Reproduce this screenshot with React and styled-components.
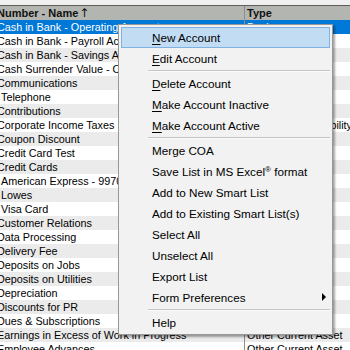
import React from 'react';
import styled, { createGlobalStyle, css } from 'styled-components';

const GlobalStyle = createGlobalStyle`
  html, body {
    margin: 0;
    padding: 0;
    background: #f0f0f0;
    overflow: hidden;
  }
  body {
    font-family: "Liberation Sans", Arial, sans-serif;
  }
`;

const Screen = styled.div`
  position: relative;
  width: 350px;
  height: 350px;
  overflow: hidden;
  background: #f0f0f0;
  padding-top: 5px;
  box-sizing: border-box;
`;

const Grid = styled.div`
  margin-left: -3px;
  width: 353px;
  border-top: 1px solid #5e5e5e;
`;

const HeaderRow = styled.div`
  display: grid;
  grid-template-columns: 247px 1fr;
  height: 14px;
  background: #b3b5b0;
  font-size: 11px;
  font-weight: bold;
  color: #111;
  line-height: 14px;
`;

const HeaderCell = styled.div`
  padding-left: ${p => (p.first ? '0' : '2px')};
  border-left: ${p => (p.first ? 'none' : '1px solid #8c8c8c')};
  white-space: nowrap;
  overflow: hidden;
`;

const SortArrow = styled.span`
  font-family: "DejaVu Sans", sans-serif;
  font-weight: normal;
  font-size: 12px;
  margin-left: 1px;
`;

const Row = styled.div`
  display: grid;
  grid-template-columns: 247px 1fr;
  height: 14px;
  line-height: 14px;
  font-size: 10.8px;
  color: #000;
  background: ${p => (p.alt ? '#ebebeb' : '#ffffff')};
  ${p =>
    p.selected &&
    css`
      background: #0078d7;
      color: #fff;
    `}
`;

const Cell = styled.div`
  white-space: nowrap;
  overflow: hidden;
  padding-left: ${p => (p.indent ? '4px' : '0')};
  ${p =>
    p.type &&
    css`
      border-left: 1px solid #8c8c8c;
      padding-left: 2px;
    `}
`;

const Menu = styled.div`
  position: absolute;
  left: 118px;
  top: 24px;
  width: 215px;
  box-sizing: border-box;
  background: #f2f2f2;
  border: 1px solid #979797;
  box-shadow: 2px 2px 2px rgba(0, 0, 0, 0.35);
  padding: 2px 2px 1px 2px;
  font-size: 11.7px;
  color: #000;
  display: flex;
  flex-direction: column;
`;

const Item = styled.div`
  position: relative;
  height: 21px;
  line-height: 19px;
  padding-left: 30px;
  box-sizing: border-box;
  white-space: nowrap;
  border: 1px solid transparent;
  ${p =>
    p.active &&
    css`
      background: #c2dcf3;
      border-color: #7fb2e3;
    `}
`;

const Key = styled.span`
  text-decoration: underline;
  text-underline-offset: 2px;
`;

const Separator = styled.div`
  height: 1px;
  margin: 1px 0 1px 27px;
  background: #c4c4c4;
  border-bottom: 1px solid #fbfbfb;
`;

const Arrow = styled.span`
  position: absolute;
  right: 3px;
  top: 5px;
  width: 0;
  height: 0;
  border-top: 4px solid transparent;
  border-bottom: 4px solid transparent;
  border-left: 4px solid #000;
`;

const Reg = styled.sup`
  font-size: 8px;
  vertical-align: 4px;
  line-height: 0;
`;

const rows = [
  ['Cash in Bank - Operating Account', 'Bank'],
  ['Cash in Bank - Payroll Account', 'Bank'],
  ['Cash in Bank - Savings Account', 'Bank'],
  ['Cash Surrender Value - Officers Life', 'Other Asset'],
  ['Communications', 'Expense'],
  ['Telephone', 'Expense', true],
  ['Contributions', 'Expense'],
  ['Corporate Income Taxes', 'Other Current Liability'],
  ['Coupon Discount', 'Income'],
  ['Credit Card Test', 'Credit Card'],
  ['Credit Cards', 'Credit Card'],
  ['American Express - 9970', 'Credit Card', true],
  ['Lowes', 'Credit Card', true],
  ['Visa Card', 'Credit Card', true],
  ['Customer Relations', 'Expense'],
  ['Data Processing', 'Expense'],
  ['Delivery Fee', 'Income'],
  ['Deposits on Jobs', 'Other Asset'],
  ['Deposits on Utilities', 'Other Asset'],
  ['Depreciation', 'Expense'],
  ['Discounts for PR', 'Expense'],
  ['Dues & Subscriptions', 'Expense'],
  ['Earnings in Excess of Work in Progress', 'Other Current Asset'],
  ['Employee Advances', 'Other Current Asset'],
];

const App = () => {
  return (
    <>
      <GlobalStyle />
      <Screen>
        <Grid>
          <HeaderRow>
            <HeaderCell first>Number - Name<SortArrow>↑</SortArrow></HeaderCell>
            <HeaderCell>Type</HeaderCell>
          </HeaderRow>
          {rows.map(([name, type, indent], i) => (
            <Row key={name} alt={i % 2 === 0} selected={i === 0}>
              <Cell indent={indent}>{name}</Cell>
              <Cell type>{type}</Cell>
            </Row>
          ))}
        </Grid>

        <Menu>
          <Item active><Key>N</Key>ew Account</Item>
          <Item><Key>E</Key>dit Account</Item>
          <Separator />
          <Item><Key>D</Key>elete Account</Item>
          <Item><Key>M</Key>ake Account Inactive</Item>
          <Item><Key>M</Key>ake Account Active</Item>
          <Separator />
          <Item>Merge COA</Item>
          <Item>Save List in MS Excel<Reg>®</Reg> format</Item>
          <Item>Add to New Smart List</Item>
          <Item>Add to Existing Smart List(s)</Item>
          <Item>Select All</Item>
          <Item>Unselect All</Item>
          <Item>Export List</Item>
          <Item>Form Preferences<Arrow /></Item>
          <Separator />
          <Item>Help</Item>
        </Menu>
      </Screen>
    </>
  );
};

export default App;
